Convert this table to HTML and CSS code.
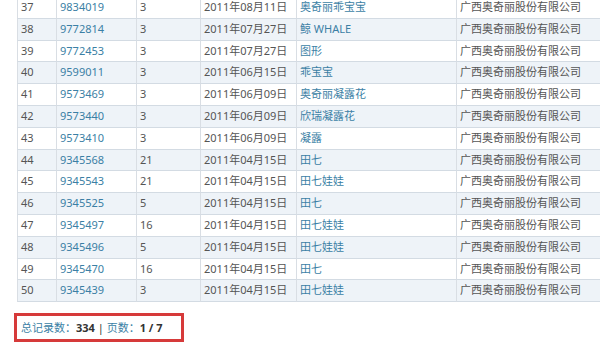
FILE: index.html
```html
<!DOCTYPE html>
<html lang="zh-CN">
<head>
<meta charset="utf-8">
<title>商标列表</title>
<link rel="stylesheet" href="styles.css">
</head>
<body>
<div class="page">
  <table class="grid">
    <colgroup>
      <col class="c-no"><col class="c-reg"><col class="c-cls"><col class="c-date"><col class="c-name"><col class="c-owner">
    </colgroup>
    <tbody>
      <tr><td class="first">37</td><td><a>9834019</a></td><td>3</td><td>2011年08月11日</td><td><a>奥奇丽乖宝宝</a></td><td>广西奥奇丽股份有限公司</td></tr>
      <tr class="alt"><td class="first">38</td><td><a>9772814</a></td><td>3</td><td>2011年07月27日</td><td><a>鲸 WHALE</a></td><td>广西奥奇丽股份有限公司</td></tr>
      <tr><td class="first">39</td><td><a>9772453</a></td><td>3</td><td>2011年07月27日</td><td><a>图形</a></td><td>广西奥奇丽股份有限公司</td></tr>
      <tr class="alt"><td class="first">40</td><td><a>9599011</a></td><td>3</td><td>2011年06月15日</td><td><a>乖宝宝</a></td><td>广西奥奇丽股份有限公司</td></tr>
      <tr><td class="first">41</td><td><a>9573469</a></td><td>3</td><td>2011年06月09日</td><td><a>奥奇丽凝露花</a></td><td>广西奥奇丽股份有限公司</td></tr>
      <tr class="alt"><td class="first">42</td><td><a>9573440</a></td><td>3</td><td>2011年06月09日</td><td><a>欣瑞凝露花</a></td><td>广西奥奇丽股份有限公司</td></tr>
      <tr><td class="first">43</td><td><a>9573410</a></td><td>3</td><td>2011年06月09日</td><td><a>凝露</a></td><td>广西奥奇丽股份有限公司</td></tr>
      <tr class="alt"><td class="first">44</td><td><a>9345568</a></td><td>21</td><td>2011年04月15日</td><td><a>田七</a></td><td>广西奥奇丽股份有限公司</td></tr>
      <tr><td class="first">45</td><td><a>9345543</a></td><td>21</td><td>2011年04月15日</td><td><a>田七娃娃</a></td><td>广西奥奇丽股份有限公司</td></tr>
      <tr class="alt"><td class="first">46</td><td><a>9345525</a></td><td>5</td><td>2011年04月15日</td><td><a>田七</a></td><td>广西奥奇丽股份有限公司</td></tr>
      <tr><td class="first">47</td><td><a>9345497</a></td><td>16</td><td>2011年04月15日</td><td><a>田七娃娃</a></td><td>广西奥奇丽股份有限公司</td></tr>
      <tr class="alt"><td class="first">48</td><td><a>9345496</a></td><td>5</td><td>2011年04月15日</td><td><a>田七娃娃</a></td><td>广西奥奇丽股份有限公司</td></tr>
      <tr><td class="first">49</td><td><a>9345470</a></td><td>16</td><td>2011年04月15日</td><td><a>田七</a></td><td>广西奥奇丽股份有限公司</td></tr>
      <tr class="alt"><td class="first">50</td><td><a>9345439</a></td><td>3</td><td>2011年04月15日</td><td><a>田七娃娃</a></td><td>广西奥奇丽股份有限公司</td></tr>
    </tbody>
  </table>
  <div class="pager">
    <span class="lbl">总记录数：</span><b>334</b> | <span class="lbl">页数：</span><b>1 / 7</b>
  </div>
</div>
</body>
</html>
```
FILE: styles.css
```css
html, body {
  margin: 0;
  padding: 0;
  background: #ffffff;
  overflow: hidden;
}
body {
  font-family: "Noto Sans", "Noto Sans CJK SC", sans-serif;
  font-size: 11px;
  color: #555555;
}
.page {
  width: 600px;
  height: 347px;
  padding-left: 17px;
  box-sizing: border-box;
  overflow: hidden;
}
.grid {
  table-layout: fixed;
  border-collapse: separate;
  border-spacing: 0;
  width: 620px;
  margin-top: -3px;
}
.c-no { width: 40px; }
.c-reg { width: 80px; }
.c-cls { width: 64px; }
.c-date { width: 96px; }
.c-name { width: 160px; }
.c-owner { width: 180px; }
.grid td {
  box-sizing: border-box;
  height: 21.8px;
  padding: 0 0 0 3px;
  line-height: 20.8px;
  border-right: 1px solid #d9dee4;
  border-bottom: 1px solid #d3dbe3;
  white-space: nowrap;
  overflow: hidden;
  vertical-align: middle;
}
.grid td.first {
  border-left: 1px solid #d9dee4;
}
.grid tr.alt td {
  background: #eef3f8;
}
.grid a {
  color: #3b7fa5;
  text-decoration: none;
}
.pager {
  margin-top: 11px;
  margin-left: -3px;
  width: 170px;
  height: 29px;
  box-sizing: border-box;
  border: 3px solid #d63a3a;
  padding-left: 4px;
  line-height: 23px;
  font-size: 11px;
  color: #333333;
}
.pager .lbl {
  color: #3b7fa5;
}
.pager b {
  font-weight: bold;
  color: #333333;
}
```
